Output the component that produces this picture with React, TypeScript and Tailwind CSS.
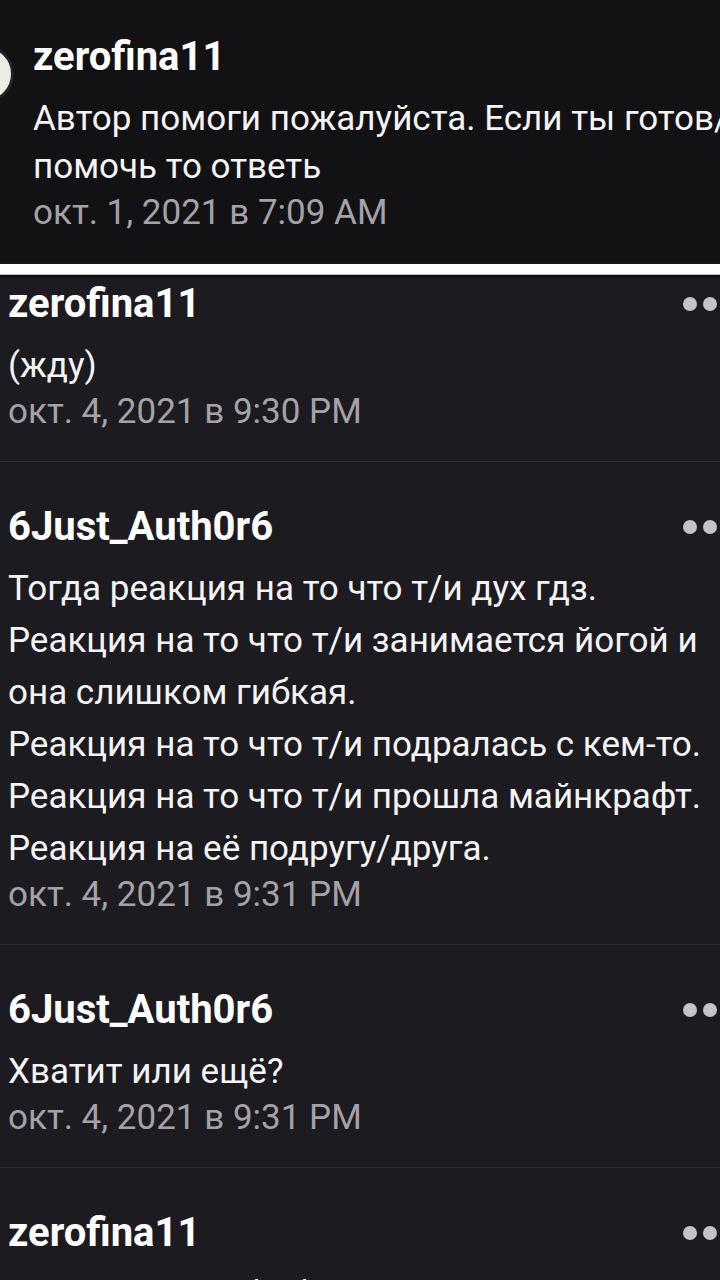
import React from "react";

type Comment = { author: string; lines: string[]; date: string };

const comments: Comment[] = [
  { author: "zerofina11", lines: ["(жду)"], date: "окт. 4, 2021 в 9:30 PM" },
  {
    author: "6Just_Auth0r6",
    lines: [
      "Тогда реакция на то что т/и дух гдз.",
      "Реакция на то что т/и занимается йогой и",
      "она слишком гибкая.",
      "Реакция на то что т/и подралась с кем-то.",
      "Реакция на то что т/и прошла майнкрафт.",
      "Реакция на её подругу/друга.",
    ],
    date: "окт. 4, 2021 в 9:31 PM",
  },
  { author: "6Just_Auth0r6", lines: ["Хватит или ещё?"], date: "окт. 4, 2021 в 9:31 PM" },
  { author: "zerofina11", lines: ["Хватит. Спасибо большое"], date: "окт. 4, 2021 в 9:32 PM" },
];

function Dots() {
  return (
    <div className="mr-[-17px] flex shrink-0 gap-[6px]">
      <span className="h-[14px] w-[14px] rounded-full bg-[#c4c3c6]" />
      <span className="h-[14px] w-[14px] rounded-full bg-[#c4c3c6]" />
      <span className="h-[14px] w-[14px] rounded-full bg-[#c4c3c6]" />
    </div>
  );
}

function CommentRow({ c, first }: { c: Comment; first?: boolean }) {
  return (
    <article className={`border-b border-[#2f2e32] pl-2 pb-[29px] ${first ? "pt-0" : "pt-[41px]"}`}>
      <div className="flex h-[48px] items-center justify-between">
        <h3 className="text-[40px] font-bold leading-[48px] text-white">{c.author}</h3>
        <Dots />
      </div>
      <div className="mt-[12px] text-[35px] leading-[52px] text-[#f4f4f5]">
        {c.lines.map((line, i) => (
          <p key={i} className="whitespace-nowrap">{line}</p>
        ))}
      </div>
      <p className="whitespace-nowrap text-[35px] leading-[40px] text-[#a4a2a7]">{c.date}</p>
    </article>
  );
}

export default function App() {
  return (
    <div className="h-[1280px] w-[720px] overflow-hidden bg-[#1c1b1f] font-['Roboto',sans-serif]">
      <header className="flex h-[262px] bg-[#121114] pt-[33px]">
        <div className="-ml-[44px] mt-[12px] h-[58px] w-[58px] shrink-0 rounded-full border-[3px] border-[#222] bg-[#ecece6]" />
        <div className="ml-[19px] whitespace-nowrap">
          <h2 className="text-[40px] font-bold leading-[48px] text-white">zerofina11</h2>
          <p className="mt-[14px] text-[35px] leading-[48px] text-[#f4f4f5]">Автор помоги пожалуйста. Если ты готов/а</p>
          <p className="text-[35px] leading-[48px] text-[#f4f4f5]">помочь то ответь</p>
          <p className="text-[35px] leading-[44px] text-[#a4a2a7]">окт. 1, 2021 в 7:09 AM</p>
        </div>
      </header>
      <div className="h-[2px] bg-[#1a191c]" />
      <div className="h-[11px] border-b border-[#bbb] bg-white" />
      <div className="h-[3px] bg-[#111013]" />
      <main className="pt-[2px]">
        {comments.map((c, i) => (
          <CommentRow key={i} c={c} first={i === 0} />
        ))}
      </main>
    </div>
  );
}
